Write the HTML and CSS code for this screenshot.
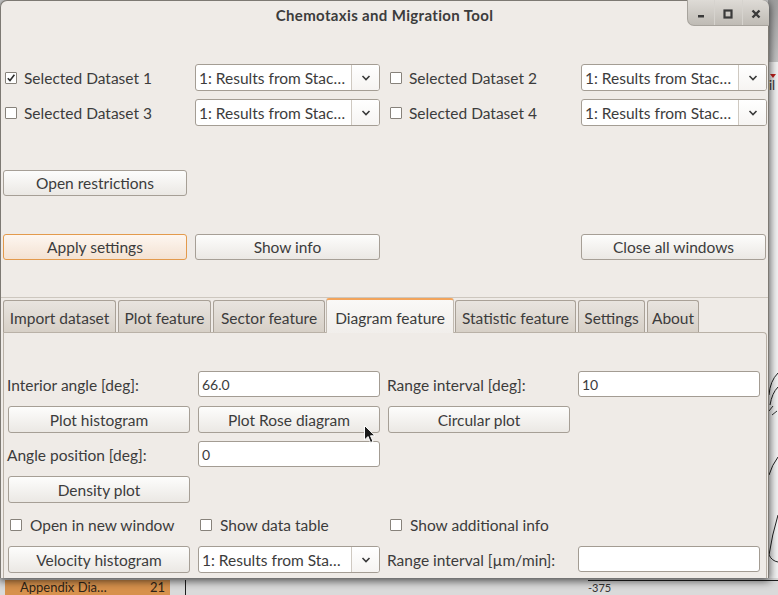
FILE: index.html
```html
<!DOCTYPE html>
<html>
<head>
<meta charset="utf-8">
<title>Chemotaxis and Migration Tool</title>
<link rel="stylesheet" href="styles.css">
</head>
<body>
<div class="desk">
  <div class="bg-right">
    <div class="bg-right-top"><span class="red-tri"></span><span class="il">il</span></div>
    <svg class="plot" width="10" height="540" viewBox="0 0 10 540">
      <path d="M10 318 Q2 326 1 340" fill="none" stroke="#222" stroke-width="1"/>
      <path d="M10 332 Q4 338 2 350" fill="none" stroke="#222" stroke-width="1"/>
      <path d="M1 356 L5 351 M4 360 L9 356" fill="none" stroke="#333" stroke-width="1"/>
      <path d="M10 402 Q4 410 1 420" fill="none" stroke="#222" stroke-width="1"/>
      <path d="M10 460 Q4 480 1 500" fill="none" stroke="#222" stroke-width="1"/>
      <path d="M1 500 Q4 506 10 507" fill="none" stroke="#222" stroke-width="1"/>
    </svg>
  </div>
  <div class="bg-bottom">
    <div class="appendix"><span>Appendix Dia…</span><span>21</span></div>
    <div class="sep-line"></div>
    <div class="axis"><span class="tick">-375</span></div>
  </div>

  <div class="window">
    <div class="titlebar">
      <span class="title">Chemotaxis and Migration Tool</span>
      <div class="wbtns">
        <div class="wbtn"><svg width="10" height="10" viewBox="0 0 10 10"><rect x="2" y="6" width="6" height="2.5" fill="#3a3a3a"/></svg></div>
        <div class="wbtn"><svg width="10" height="10" viewBox="0 0 10 10"><rect x="1.5" y="1.5" width="7" height="7" fill="none" stroke="#3a3a3a" stroke-width="2.2"/></svg></div>
        <div class="wbtn"><svg width="10" height="10" viewBox="0 0 10 10"><path d="M1.5 1.5 L8.5 8.5 M8.5 1.5 L1.5 8.5" stroke="#3a3a3a" stroke-width="2.4"/></svg></div>
      </div>
    </div>

    <div class="grid4 datasets">
      <label class="check"><span class="box checked"><svg width="10" height="10" viewBox="0 0 10 10"><path d="M1.8 5.2 L4 7.6 L8.4 1.8" fill="none" stroke="#2e2e2e" stroke-width="1.6"/></svg></span>Selected Dataset 1</label>
      <div class="combo"><span class="combo-text">1: Results from Stac…</span><span class="combo-arrow"><svg width="10" height="6" viewBox="0 0 10 6"><path d="M1.5 1 L5 4.5 L8.5 1" fill="none" stroke="#3a3a3a" stroke-width="1.6"/></svg></span></div>
      <label class="check"><span class="box"></span>Selected Dataset 2</label>
      <div class="combo"><span class="combo-text">1: Results from Stac…</span><span class="combo-arrow"><svg width="10" height="6" viewBox="0 0 10 6"><path d="M1.5 1 L5 4.5 L8.5 1" fill="none" stroke="#3a3a3a" stroke-width="1.6"/></svg></span></div>
      <label class="check"><span class="box"></span>Selected Dataset 3</label>
      <div class="combo"><span class="combo-text">1: Results from Stac…</span><span class="combo-arrow"><svg width="10" height="6" viewBox="0 0 10 6"><path d="M1.5 1 L5 4.5 L8.5 1" fill="none" stroke="#3a3a3a" stroke-width="1.6"/></svg></span></div>
      <label class="check"><span class="box"></span>Selected Dataset 4</label>
      <div class="combo"><span class="combo-text">1: Results from Stac…</span><span class="combo-arrow"><svg width="10" height="6" viewBox="0 0 10 6"><path d="M1.5 1 L5 4.5 L8.5 1" fill="none" stroke="#3a3a3a" stroke-width="1.6"/></svg></span></div>
    </div>

    <div class="grid4 restrict">
      <button class="btn btn-short">Open restrictions</button>
    </div>

    <div class="grid4 actions">
      <button class="btn btn-short btn-default">Apply settings</button>
      <button class="btn btn-short">Show info</button>
      <span></span>
      <button class="btn btn-short btn-close">Close all windows</button>
    </div>

    <div class="tabframe">
      <div class="tabs">
        <div class="tab tab-import">Import dataset</div>
        <div class="tab tab-plot">Plot feature</div>
        <div class="tab tab-sector">Sector feature</div>
        <div class="tab tab-diagram active">Diagram feature</div>
        <div class="tab tab-stat">Statistic feature</div>
        <div class="tab tab-settings">Settings</div>
        <div class="tab tab-about">About</div>
      </div>
      <div class="panel">
        <div class="pgrid">
          <span class="plabel">Interior angle [deg]:</span>
          <div class="field">66.0</div>
          <span class="plabel">Range interval [deg]:</span>
          <div class="field">10</div>

          <button class="btn">Plot histogram</button>
          <button class="btn">Plot Rose diagram</button>
          <button class="btn">Circular plot</button>
          <span></span>

          <span class="plabel">Angle position [deg]:</span>
          <div class="field">0</div>
          <span></span>
          <span></span>

          <button class="btn">Density plot</button>
          <span></span>
          <span></span>
          <span></span>

          <label class="check pcheck"><span class="box"></span>Open in new window</label>
          <label class="check pcheck"><span class="box"></span>Show data table</label>
          <label class="check pcheck"><span class="box"></span>Show additional info</label>
          <span></span>

          <button class="btn">Velocity histogram</button>
          <div class="combo"><span class="combo-text">1: Results from Sta…</span><span class="combo-arrow"><svg width="10" height="6" viewBox="0 0 10 6"><path d="M1.5 1 L5 4.5 L8.5 1" fill="none" stroke="#3a3a3a" stroke-width="1.6"/></svg></span></div>
          <span class="plabel">Range interval [µm/min]:</span>
          <div class="field"></div>
        </div>
        <svg class="cursor" width="12" height="19" viewBox="0 0 12 19"><path d="M0.5 0.5 L0.5 15 L4 11.5 L6.5 17.5 L9 16.5 L6.5 10.8 L11 10.8 Z" fill="#1a1a1a" stroke="#ffffff" stroke-width="1"/></svg>
      </div>
    </div>
  </div>
</div>
</body>
</html>
```

FILE: styles.css
```css
* { box-sizing: border-box; }

html, body {
  margin: 0;
  padding: 0;
}

body {
  font-family: "Lato", "Liberation Sans", sans-serif;
  font-size: 15.5px;
  color: #3c3c3c;
  background: #d8d8d8;
}

.desk {
  position: relative;
  width: 778px;
  height: 595px;
  overflow: hidden;
  background: #d9d9d9;
}

/* ---------- background (behind the window) ---------- */
.bg-right {
  position: absolute;
  left: 768px;
  top: 0;
  width: 10px;
  height: 595px;
  background: #f3f3f3;
}

.bg-right-top {
  height: 62px;
  background: linear-gradient(#9f9f9f, #c4c4c4);
  position: relative;
}

.red-tri {
  position: absolute;
  left: 2px;
  top: 74px;
  width: 0;
  height: 0;
  border-left: 3px solid transparent;
  border-right: 3px solid transparent;
  border-top: 4px solid #c0201c;
}

.il {
  position: absolute;
  left: 1px;
  top: 77px;
  font-size: 13px;
  color: #333;
}

.plot {
  position: absolute;
  left: 0;
  top: 55px;
}

.bg-bottom {
  position: absolute;
  left: 0;
  top: 578px;
  width: 778px;
  height: 17px;
  background: #dadada;
}

.appendix {
  position: absolute;
  left: 5px;
  top: 2px;
  width: 165px;
  height: 15px;
  background: #d7914c;
  display: flex;
  justify-content: space-between;
  padding: 0 5px 0 15px;
  font-size: 13px;
  line-height: 15px;
  color: #2e2418;
}

.sep-line {
  position: absolute;
  left: 185px;
  top: 2px;
  width: 1px;
  height: 15px;
  background: #1e1e1e;
}

.axis {
  position: absolute;
  left: 588px;
  top: 2px;
  width: 190px;
  height: 15px;
  border-top: 1px solid #1e1e1e;
}

.tick {
  position: absolute;
  left: 0;
  top: 1px;
  font-size: 11px;
  line-height: 12px;
  color: #333;
}

/* ---------- window ---------- */
.window {
  position: absolute;
  left: 0;
  top: 0;
  width: 769px;
  height: 578px;
  background: #efebe7;
  border: 1px solid #7d7973;
  border-bottom: none;
  border-radius: 7px 7px 0 0;
  box-shadow: 0 2px 9px 1px rgba(0, 0, 0, 0.65);
  display: flex;
  flex-direction: column;
}

.titlebar {
  position: relative;
  height: 31px;
  display: flex;
  justify-content: center;
  align-items: center;
  flex-shrink: 0;
}

.title {
  font-weight: bold;
  font-size: 15px;
  letter-spacing: 0.35px;
  color: #3c3c3c;
  margin-top: -3px;
}

.wbtns {
  position: absolute;
  right: -1px;
  top: -1px;
  width: 82px;
  height: 26px;
  display: flex;
  background: linear-gradient(#dedbd6, #bfbbb5);
  border-bottom-left-radius: 7px;
  border-top-right-radius: 7px;
  border-left: 1px solid #a7a39d;
  border-bottom: 1px solid #a7a39d;
  overflow: hidden;
}

.wbtn {
  flex: 1;
  display: flex;
  align-items: center;
  justify-content: center;
  padding-top: 2px;
}

.wbtn + .wbtn {
  border-left: 1px solid #d6d3ce;
}

/* ---------- grids ---------- */
.grid4 {
  display: grid;
  grid-template-columns: 184px 185px 185px 186px;
  column-gap: 8px;
  padding-left: 2px;
}

.datasets {
  margin-top: 32px;
  grid-auto-rows: 27px;
  row-gap: 8px;
}

.restrict {
  margin-top: 44px;
}

.actions {
  margin-top: 38px;
}

/* ---------- checkbox ---------- */
.check {
  display: flex;
  align-items: center;
  gap: 7px;
  padding-left: 2px;
  white-space: nowrap;
}

.box {
  width: 12px;
  height: 12px;
  flex-shrink: 0;
  background: #ffffff;
  border: 1px solid #87827b;
  border-radius: 1px;
  display: flex;
  align-items: center;
  justify-content: center;
}

/* ---------- combo ---------- */
.combo {
  display: flex;
  height: 27px;
  background: #ffffff;
  border: 1px solid #a49d94;
  border-radius: 3px;
  overflow: hidden;
}

.combo-text {
  flex: 1;
  padding-left: 3px;
  display: flex;
  align-items: center;
  white-space: nowrap;
  overflow: hidden;
}

.combo-arrow {
  width: 28px;
  flex-shrink: 0;
  border-left: 1px solid #cfc9c1;
  display: flex;
  align-items: center;
  justify-content: center;
  background: linear-gradient(#ffffff, #f6f4f2);
}

/* ---------- buttons ---------- */
.btn {
  font-family: inherit;
  font-size: 15.5px;
  color: #3c3c3c;
  height: 27px;
  margin: 0;
  padding: 0;
  background: linear-gradient(#fdfdfc, #ebe8e4);
  border: 1px solid #a69f96;
  border-radius: 3px;
  text-align: center;
}

.btn-short {
  height: 26px;
}

.btn-default {
  border-color: #e39a4c;
  background: linear-gradient(#fdf6f0, #f4e2d2);
}

.btn-close {
  width: 185px;
}

/* ---------- tabs ---------- */
.tabframe {
  flex: 1;
  margin-top: 37px;
  border-top: 1px solid #cdc7bf;
  display: flex;
  flex-direction: column;
}

.tabs {
  display: flex;
  align-items: flex-end;
  gap: 2px;
  height: 34px;
  padding-left: 2px;
  flex-shrink: 0;
}

.tab {
  height: 32px;
  padding: 0;
  text-align: center;
  line-height: 34px;
  white-space: nowrap;
  background: linear-gradient(#e8e4df, #d7d0c7);
  border: 1px solid #a9a197;
  border-bottom: none;
  border-radius: 3px 3px 0 0;
}

.tab-import { width: 113px; }
.tab-plot { width: 93px; }
.tab-sector { width: 112px; margin-right: -1px; }
.tab-diagram { width: 128px; margin-right: -1px; }
.tab-stat { width: 121px; }
.tab-settings { width: 67px; }
.tab-about { width: 52px; }

.tab.active {
  height: 35px;
  margin-bottom: -1px;
  position: relative;
  z-index: 1;
  background: linear-gradient(#faf9f7, #f1eeeb);
  border: 1px solid #c2bbb2;
  border-top: 2px solid #f2a45c;
  border-bottom: none;
  line-height: 36px;
}

.panel {
  position: relative;
  flex: 1;
  margin-left: 2px;
  margin-right: 1px;
  border: 1px solid #b9b1a7;
  border-bottom: none;
  border-radius: 0 4px 0 0;
  padding: 38px 0 0 4px;
}

.pgrid {
  display: grid;
  grid-template-columns: 182px 182px 182px 182px;
  grid-auto-rows: 27px;
  column-gap: 8px;
  row-gap: 8px;
}

.plabel {
  display: flex;
  align-items: center;
  margin-left: -1px;
  white-space: nowrap;
}

.field {
  height: 26px;
  background: #ffffff;
  border: 1px solid #a39c93;
  border-radius: 3px;
  padding-left: 3px;
  display: flex;
  align-items: center;
  font-size: 14px;
}

.pcheck {
  padding-left: 2px;
  gap: 8px;
}

.cursor {
  position: absolute;
  left: 360px;
  top: 92px;
}
```
